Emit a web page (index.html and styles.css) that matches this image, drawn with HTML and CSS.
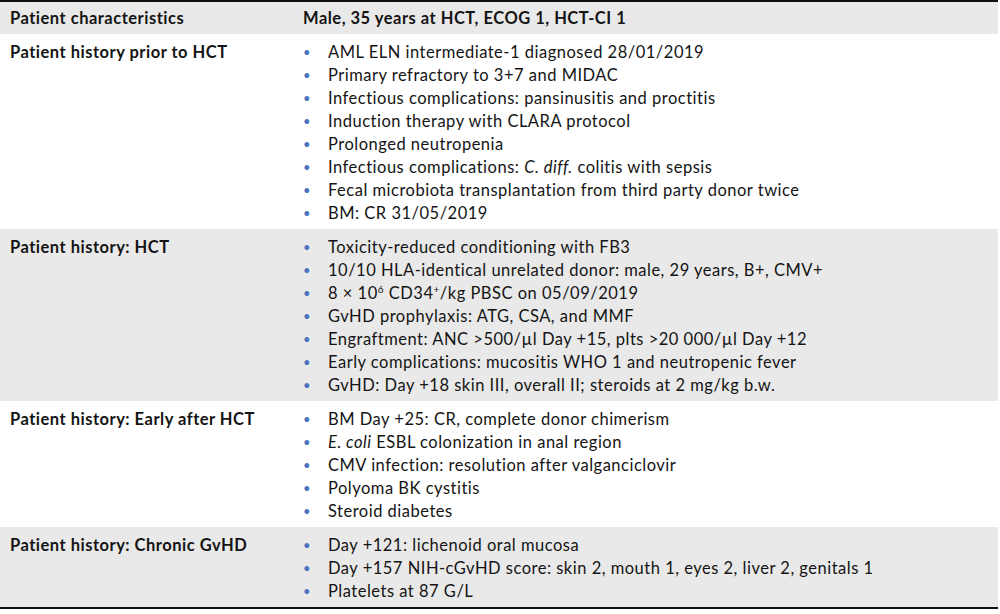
FILE: index.html
```html
<!DOCTYPE html>
<html>
<head>
<meta charset="utf-8">
<link rel="stylesheet" href="styles.css">
</head>
<body>
<table class="tbl">
  <tr class="row head">
    <th class="c1">Patient characteristics</th>
    <th class="c2">Male, 35 years at HCT, ECOG 1, HCT-CI 1</th>
  </tr>
  <tr class="row">
    <td class="c1">Patient history prior to HCT</td>
    <td class="c2">
      <ul class="list">
        <li>AML ELN intermediate-1 diagnosed 28/01/2019</li>
        <li>Primary refractory to 3+7 and MIDAC</li>
        <li>Infectious complications: pansinusitis and proctitis</li>
        <li>Induction therapy with CLARA protocol</li>
        <li>Prolonged neutropenia</li>
        <li>Infectious complications: <i>C. diff.</i> colitis with sepsis</li>
        <li>Fecal microbiota transplantation from third party donor twice</li>
        <li>BM: CR 31/05/2019</li>
      </ul>
    </td>
  </tr>
  <tr class="row shaded">
    <td class="c1">Patient history: HCT</td>
    <td class="c2">
      <ul class="list">
        <li>Toxicity-reduced conditioning with FB3</li>
        <li>10/10 HLA-identical unrelated donor: male, 29 years, B+, CMV+</li>
        <li>8 × 10<sup>6</sup> CD34<sup>+</sup>/kg PBSC on 05/09/2019</li>
        <li>GvHD prophylaxis: ATG, CSA, and MMF</li>
        <li>Engraftment: ANC &gt;500/µl Day +15, plts &gt;20 000/µl Day +12</li>
        <li>Early complications: mucositis WHO 1 and neutropenic fever</li>
        <li>GvHD: Day +18 skin III, overall II; steroids at 2 mg/kg b.w.</li>
      </ul>
    </td>
  </tr>
  <tr class="row">
    <td class="c1">Patient history: Early after HCT</td>
    <td class="c2">
      <ul class="list">
        <li>BM Day +25: CR, complete donor chimerism</li>
        <li><i>E. coli</i> ESBL colonization in anal region</li>
        <li>CMV infection: resolution after valganciclovir</li>
        <li>Polyoma BK cystitis</li>
        <li>Steroid diabetes</li>
      </ul>
    </td>
  </tr>
  <tr class="row shaded last">
    <td class="c1">Patient history: Chronic GvHD</td>
    <td class="c2">
      <ul class="list">
        <li>Day +121: lichenoid oral mucosa</li>
        <li>Day +157 NIH-cGvHD score: skin 2, mouth 1, eyes 2, liver 2, genitals 1</li>
        <li>Platelets at 87 G/L</li>
      </ul>
    </td>
  </tr>
</table>
</body>
</html>
```
FILE: styles.css
```css
html, body {
  margin: 0;
  padding: 0;
  background: #ffffff;
}
body {
  font-family: Lato, "Open Sans", sans-serif;
  font-size: 16.5px;
  letter-spacing: 0.5px;
  color: #141414;
}
.tbl {
  width: 998px;
  border-collapse: collapse;
  border-top: 2px solid #111111;
  border-bottom: 2px solid #111111;
}
.row > th, .row > td {
  vertical-align: top;
  text-align: left;
  line-height: 23px;
  padding: 7px 10px 4px 10px;
}
.head > th {
  background: #e9e9e9;
  padding-top: 5px;
  padding-bottom: 4px;
  font-weight: 700;
}
.shaded > td {
  background: #e9e9e9;
}
.c1 {
  width: 273px;
  font-weight: 700;
}
.list {
  list-style: none;
  margin: 0;
  padding: 0;
}
.list li {
  position: relative;
  padding-left: 25px;
}
.list li::before {
  content: "•";
  position: absolute;
  left: 0;
  top: 0;
  color: #4a73c0;
  font-size: 13px;
}
sup {
  font-size: 10px;
  line-height: 0;
  vertical-align: 6px;
}
```
